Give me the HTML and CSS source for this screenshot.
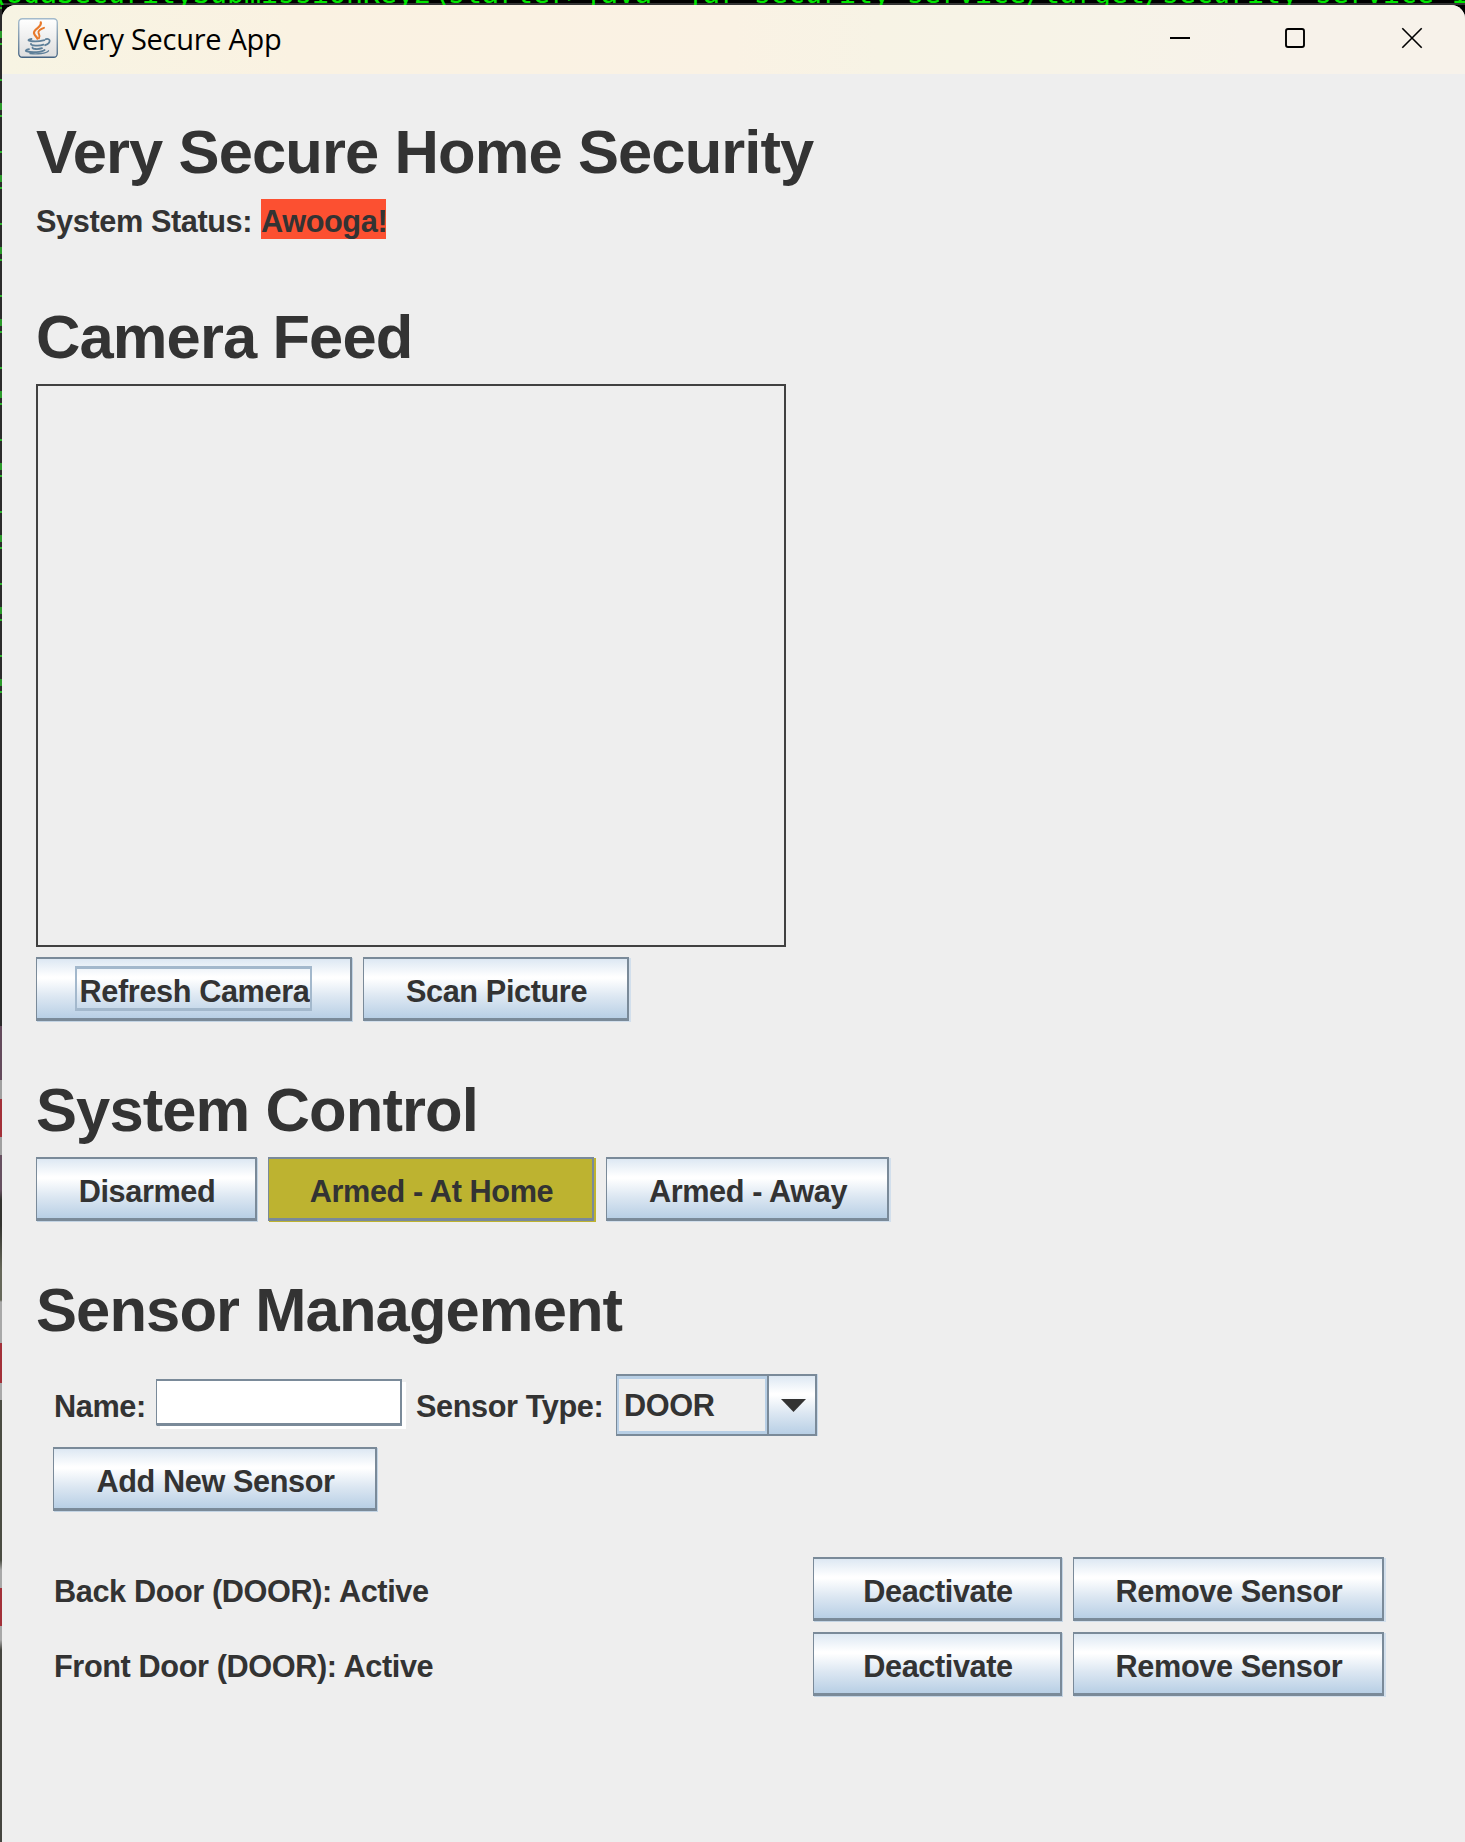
FILE: index.html
```html
<!DOCTYPE html>
<html lang="en">
<head>
<meta charset="utf-8">
<title>Very Secure App</title>
<link rel="stylesheet" href="styles.css">
</head>
<body>
<div class="terminal">\UdaSecuritySubmissionKey2\starter&gt;java -jar security-service/target/security-service-1</div>
<div class="window">
  <header class="titlebar">
    <svg class="java" viewBox="0 0 40 40">
      <defs><linearGradient id="tile" x1="0" y1="0" x2="0" y2="1"><stop offset="0" stop-color="#fff"/><stop offset="1" stop-color="#dedede"/></linearGradient>
      <linearGradient id="edge" x1="0" y1="0" x2="0" y2="1"><stop offset="0" stop-color="#a3bacb"/><stop offset="1" stop-color="#456483"/></linearGradient></defs>
      <rect x=".75" y=".75" width="38.5" height="38.5" rx="3.5" fill="url(#tile)" stroke="url(#edge)" stroke-width="1.3"/>
      <g fill="none" stroke="#e8792b" stroke-linecap="round">
        <path d="M22.8 4.3c1.4 5.2-7.4 6.5-6.8 10.8.2 1.900 2.300 3.500 3.500 5.500" stroke-width="2.200"/>
        <path d="M26 9.800c-3.200 1-6.300 3-5.500 5.200.5 1.400 2 2.400.4 5.200" stroke-width="1.900"/>
      </g>
      <g fill="none" stroke="#5d7f99" stroke-linecap="round" stroke-width="1.800">
        <path d="M13.500 21c-2.700.5-3.800 1.200-2.500 1.600 3.500 1 10.500.8 15.500-.5"/>
        <path d="M13 25.800c-.8 2 8.500 2.400 12.500.8"/>
        <path d="M14.500 29.500c-.4 1.800 6 2 9.500.7"/>
        <path d="M27.800 21.200c4.800-1.400 5.700 3.800-.6 6"/>
        <path d="M11 31.200c-3 .5-4.300 1.600-2 2.200 5 1.400 14.500 1 17.600-1.400"/>
        <path d="M12 35.500c7 .9 16.500 0 18.500-2.700" stroke-width="1.300"/>
      </g>
    </svg>
    <span class="title">Very Secure App</span>
    <svg class="controls" viewBox="0 0 254 22" fill="none" stroke="#000" stroke-width="1.900">
      <path d="M0 11h20"/>
      <rect x="116" y="2" width="18" height="18" rx="2"/>
      <path d="M232.300 1.300l19.400 19.400M251.700 1.300l-19.400 19.400" stroke-width="1.600"/>
    </svg>
  </header>
  <main>
    <section class="status">
      <h1>Very Secure Home Security</h1>
      <div class="line"><span class="key">System Status:</span><span class="alarm">Awooga!</span></div>
    </section>
    <section class="camera">
      <h1>Camera Feed</h1>
      <div class="feed"></div>
      <div class="row">
        <button class="btn refresh focused"><span>Refresh Camera</span></button>
        <button class="btn scan wide-edge"><span>Scan Picture</span></button>
      </div>
    </section>
    <section class="control">
      <h1>System Control</h1>
      <div class="row">
        <button class="btn disarmed"><span>Disarmed</span></button>
        <button class="btn home wide-edge selected"><span>Armed - At Home</span></button>
        <button class="btn away wide-edge"><span>Armed - Away</span></button>
      </div>
    </section>
    <section class="sensors">
      <h1>Sensor Management</h1>
      <div class="form">
        <label class="name">Name:</label>
        <div class="field"></div>
        <label class="type">Sensor Type:</label>
        <div class="combo"><div class="value">DOOR</div><div class="drop"><svg viewBox="0 0 25 13"><path d="M0 0h25L12.500 13z" fill="#333"/></svg></div></div>
      </div>
      <button class="btn add"><span>Add New Sensor</span></button>
      <div class="list">
        <div class="sensor"><span class="label">Back Door (DOOR): Active</span><button class="btn deact"><span>Deactivate</span></button><button class="btn remove wide-edge"><span>Remove Sensor</span></button></div>
        <div class="sensor"><span class="label">Front Door (DOOR): Active</span><button class="btn deact"><span>Deactivate</span></button><button class="btn remove wide-edge"><span>Remove Sensor</span></button></div>
      </div>
    </section>
  </main>
</div>
</body>
</html>
```
FILE: styles.css
```css
*, *::before { box-sizing: border-box; }
body {
  margin: 0;
  width: 1465px;
  height: 1842px;
  overflow: hidden;
  position: relative;
  padding: 5px 0 0 2px;
  background:
    linear-gradient(#333, #333) 0 3px / 100% 2px no-repeat,
    repeating-linear-gradient(transparent 0 7px, #2ab52a 7px 9px, transparent 9px 31px, #2a9a2a 31px 38px, transparent 38px 43px, #2ab52a 43px 45px, transparent 45px 72px) 0 0 / 2px 700px no-repeat,
    linear-gradient(#2b2b2b 0 1026px, #634a5c 1026px 1080px, #a0a0a0 1080px 1099px, #a33039 1099px 1137px, #a0a0a0 1137px 1155px, #665060 1155px 1190px, #33332f 1200px 1225px, #66685a 1270px 1300px, #a8a8a8 1302px 1343px, #a33039 1343px 1383px, #a8a8a8 1383px 1400px, #4a4c42 1400px 1560px, #a8a8a8 1570px 1588px, #a33039 1588px 1626px, #a8a8a8 1626px 1640px, #45453f 1650px 100%) 0 0 / 2px 100% no-repeat,
    #000;
  color: #333;
  font-family: "Liberation Sans", Arial, sans-serif;
  font-size: 30.700px;
  letter-spacing: -0.4px;
  font-weight: bold;
}
.terminal {
  position: absolute;
  left: -11px;
  top: -25px;
  width: 1476px;
  height: 30px;
  overflow: hidden;
  white-space: pre;
  font: 28.24px/37px "DejaVu Sans Mono", monospace;
  letter-spacing: 0;
  color: #00e600;
}
.window {
  position: relative;
  height: 1837px;
  background: #eee;
  border-radius: 14px 14px 0 0;
  overflow: hidden;
}
.titlebar {
  height: 69px;
  display: flex;
  align-items: flex-start;
  padding: 13px 41px 0 16px;
  background: linear-gradient(90deg, #f7f4e3 0, #faf2e2 20%, #faf2e4 50%, #f7f3e5 60%, #f7f3e8 76%, #f7f2ea 85%);
}
.java { width: 40px; height: 40px; }
.title {
  margin-left: 7px;
  font: 29px/42px "Open Sans", "Noto Sans", sans-serif;
  letter-spacing: -0.3px;
  color: #000;
  white-space: nowrap;
}
.controls { width: 254px; height: 22px; margin: 9px 0 0 auto; }
main { padding: 43px 0 0 34px; }
h1 { margin: 0; font-size: 61.500px; letter-spacing: -0.9px; line-height: 69px; height: 68px; white-space: nowrap; }
section { display: flow-root; }
.status { height: 185px; }
.line { display: flex; margin-top: 14px; line-height: 35px; white-space: nowrap; }
.key { width: 225px; padding-top: 5px; }
.alarm { width: 125px; height: 40px; padding-top: 5px; background: #fc5031; }
.camera { height: 773px; }
.feed { width: 750px; height: 563px; margin-top: 14px; border: 2px solid #404040; }
.row { display: flex; margin-top: 10px; }
.btn {
  display: flex;
  flex: none;
  justify-content: center;
  height: 64px;
  padding: 5px 0 0 2px;
  border: solid #7a8a99;
  border-width: 2px 2px 3px 1px;
  border-radius: 0;
  background: linear-gradient(#dde8f3 0, #fff 30%, #fff 33%, #dce7f2 64%, #b8cfe5 100%) padding-box;
  box-shadow: 1px 1px 0 #c3d4e4;
  color: #333;
  font: bold 30.700px/55px "Liberation Sans", Arial, sans-serif;
  letter-spacing: -0.4px;
  white-space: nowrap;
}
.wide-edge { box-shadow: 1px 1px 0 #d2dfec, 2px 1px 0 #d2dfec; }
.refresh { width: 316px; margin-right: 11px; }
.scan { width: 266px; }
.focused { position: relative; }
.focused::before {
  content: "";
  position: absolute;
  left: 38px;
  top: 7px;
  width: 237px;
  height: 45px;
  border: solid #a3b8cc;
  border-width: 3px 2px;
}
.control { height: 200px; }
.control .row, .camera .row { height: 64px; }
.control .row { margin-top: 14px; }
.disarmed { width: 221px; margin-right: 11px; }
.home { width: 326px; margin-right: 12px; }
.away { width: 283px; }
.selected { background: #bdb330; box-shadow: 1px 1px 0 #bdb330, 2px 1px 0 #bdb330; }
.form { display: flex; height: 63px; margin: 31px 0 0 17px; }
.form label { line-height: 35px; padding-top: 15px; white-space: nowrap; }
.form .name { width: 103px; padding-left: 1px; }
.field {
  width: 246px;
  height: 47px;
  margin: 5px 14px 0 0;
  background: #fff;
  border: solid #7a8a99;
  border-width: 2px 2px 3px 1px;
  box-shadow: 4px 3px 0 #fff;
  clip-path: polygon(0 0, 246px 0, 250px 0, 250px 50px, 1px 50px, 1px 47px, 0 46px);
}
.type { width: 200px; }
.combo { display: flex; width: 201px; height: 62px; border: 2px solid #7a8a99; border-left-width: 1px; box-shadow: 1px 0 0 #c8d8e8; }
.value { width: 150px; border: solid #b8cfe5; border-width: 3px 2px; padding: 9px 0 0 5px; line-height: 35px; }
.drop { flex: 1; border-left: 2px solid #7a8a99; background: linear-gradient(#dde8f3 0, #fff 30%, #fff 33%, #dce7f2 64%, #b8cfe5 100%); }
.drop svg { display: block; width: 25px; height: 13px; margin: 23px 0 0 12px; }
.add { width: 324px; margin: 10px 0 0 17px; }
.list { margin: 46px 0 0 17px; }
.sensor { display: flex; height: 64px; margin-bottom: 11px; }
.label { width: 760px; padding: 17px 0 0 1px; line-height: 35px; white-space: nowrap; }
.deact { width: 249px; margin-right: 11px; }
.remove { width: 311px; }
```
